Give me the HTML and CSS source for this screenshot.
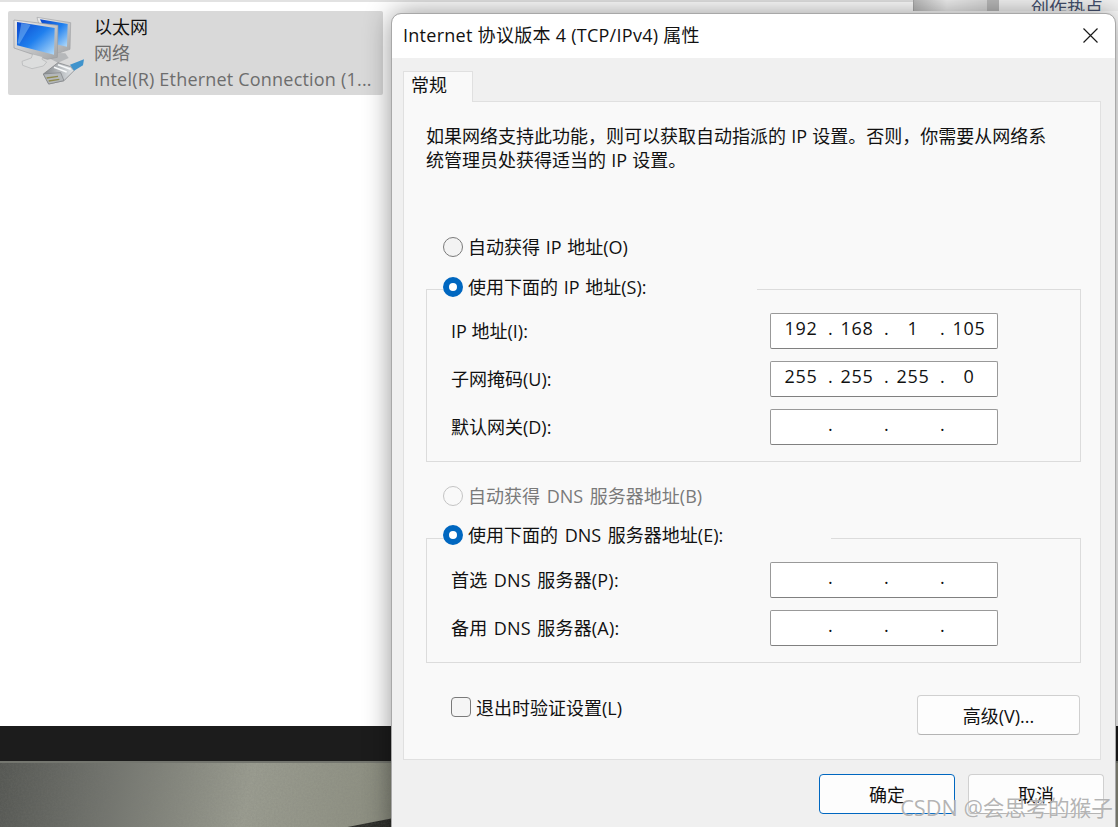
FILE: index.html
```html
<!DOCTYPE html>
<html lang="zh-CN">
<head>
    <meta charset="utf-8">
    <title>Internet 协议版本 4 (TCP/IPv4) 属性</title>
    <link rel="stylesheet" href="styles.css">
</head>
<body>
    <div class="desktop">
        <!-- 后面的网络连接窗口 -->
        <div class="top-strip">
            <div class="strip-a"></div>
            <div class="strip-c"></div>
            <div class="strip-d">创作热点</div>
        </div>
        <div class="connections">
            <div class="adapter">
                <svg class="adapter-icon" width="84" height="80" viewBox="0 0 252 240">
                    <defs>
                        <linearGradient id="screen" x1="0" y1="0" x2="1" y2="1">
                            <stop offset="0" stop-color="#0a46cc"/>
                            <stop offset="0.5" stop-color="#1f7fee"/>
                            <stop offset="1" stop-color="#b4dcfa"/>
                        </linearGradient>
                        <linearGradient id="frame" x1="0" y1="0" x2="1" y2="1">
                            <stop offset="0" stop-color="#eeeeef"/>
                            <stop offset="1" stop-color="#a2a4a6"/>
                        </linearGradient>
                        <linearGradient id="plug" x1="0" y1="0" x2="1" y2="0">
                            <stop offset="0" stop-color="#83878b"/>
                            <stop offset="1" stop-color="#e2e6e9"/>
                        </linearGradient>
                    </defs>
                    <!-- 后面的显示器 -->
                    <path d="M87 16 L188 32 L186 112 L150 124 L110 100 Z" fill="url(#frame)" stroke="#a0a2a4" stroke-width="2"/>
                    <path d="M96 22 L179 36 L177 104 L130 94 Z" fill="url(#screen)"/>
                    <path d="M130 122 L172 124 L182 138 L150 152 L126 140 Z" fill="#b6b8ba"/>
                    <!-- 前面的显示器 -->
                    <path d="M18 24 L150 40 L148 136 L118 142 L18 108 Z" fill="url(#frame)" stroke="#9a9c9e" stroke-width="2"/>
                    <path d="M27 30 L140 48 L138 128 L27 100 Z" fill="url(#screen)"/>
                    <path d="M40 33 L68 38 L34 96 L29 94 Z" fill="#7dbcf7" opacity="0.5"/>
                    <path d="M74 126 L104 134 L102 142 L116 150 L106 162 L72 170 L44 160 L42 148 L70 138 Z" fill="#dcdddd" stroke="#b0b2b3" stroke-width="2"/>
                    <!-- 网线水晶头 -->
                    <path d="M106 186 L150 152 L188 164 L198 176 L168 206 L122 216 Z" fill="url(#plug)" stroke="#77797c" stroke-width="2"/>
                    <path d="M106 186 L158 182 L168 206 L122 216 Z" fill="#b4b8bb" stroke="#7d8083" stroke-width="2"/>
                    <path d="M116 198 L150 193 M122 207 L154 202" stroke="#8f8a4e" stroke-width="4" fill="none"/>
                    <path d="M138 166 L176 180 M150 158 L188 172" stroke="#f7f9fa" stroke-width="5" fill="none"/>
                    <path d="M186 158 L228 142 L225 160 L198 176 Z" fill="#3f93cc"/>
                </svg>
                <div class="adapter-text">
                    <div class="adapter-name">以太网</div>
                    <div class="adapter-line">网络</div>
                    <div class="adapter-line latin">Intel(R) Ethernet Connection (1...</div>
                </div>
            </div>
        </div>
        <div class="taskbar"></div>
        <div class="wallpaper">
            <svg class="grain" width="392" height="64">
                <filter id="noise">
                    <feTurbulence type="fractalNoise" baseFrequency="0.55" numOctaves="2" seed="4"/>
                    <feColorMatrix values="0 0 0 0 0.2  0 0 0 0 0.2  0 0 0 0 0.18  0 0 0 1.2 -0.35"/>
                </filter>
                <rect width="392" height="64" filter="url(#noise)" opacity="0.3"/>
            </svg>
        </div>

        <!-- 属性对话框 -->
        <div class="dialog">
            <div class="title-bar">
                <span class="title-text">Internet 协议版本 4 (TCP/IPv4) 属性</span>
                <svg class="close-icon" width="15" height="15" viewBox="0 0 15 15">
                    <path d="M0.5 0.5 L14.5 14.5 M14.5 0.5 L0.5 14.5" stroke="#1a1a1a" stroke-width="1.2" fill="none"/>
                </svg>
            </div>
            <div class="dialog-body">
                <div class="tab">常规</div>
                <div class="tab-panel">
                    <p class="intro">如果网络支持此功能，则可以获取自动指派的 IP 设置。否则，你需要从网络系<br>统管理员处获得适当的 IP 设置。</p>

                    <label class="radio-line first-radio"><span class="radio"></span>自动获得 IP 地址(O)</label>
                    <div class="group">
                        <label class="radio-line legend"><span class="radio checked"></span>使用下面的 IP 地址(S):</label>
                        <div class="field-row">
                            <span class="field-label">IP 地址(I):</span>
                            <div class="ip-field">
                                <span class="seg">192</span><span class="dot">.</span>
                                <span class="seg">168</span><span class="dot">.</span>
                                <span class="seg">1</span><span class="dot">.</span>
                                <span class="seg">105</span>
                            </div>
                        </div>
                        <div class="field-row">
                            <span class="field-label">子网掩码(U):</span>
                            <div class="ip-field">
                                <span class="seg">255</span><span class="dot">.</span>
                                <span class="seg">255</span><span class="dot">.</span>
                                <span class="seg">255</span><span class="dot">.</span>
                                <span class="seg">0</span>
                            </div>
                        </div>
                        <div class="field-row">
                            <span class="field-label">默认网关(D):</span>
                            <div class="ip-field">
                                <span class="seg"></span><span class="dot">.</span>
                                <span class="seg"></span><span class="dot">.</span>
                                <span class="seg"></span><span class="dot">.</span>
                                <span class="seg"></span>
                            </div>
                        </div>
                    </div>

                    <label class="radio-line dns-radio disabled"><span class="radio"></span>自动获得 DNS 服务器地址(B)</label>
                    <div class="group dns-group">
                        <label class="radio-line legend"><span class="radio checked"></span>使用下面的 DNS 服务器地址(E):</label>
                        <div class="field-row">
                            <span class="field-label">首选 DNS 服务器(P):</span>
                            <div class="ip-field">
                                <span class="seg"></span><span class="dot">.</span>
                                <span class="seg"></span><span class="dot">.</span>
                                <span class="seg"></span><span class="dot">.</span>
                                <span class="seg"></span>
                            </div>
                        </div>
                        <div class="field-row">
                            <span class="field-label">备用 DNS 服务器(A):</span>
                            <div class="ip-field">
                                <span class="seg"></span><span class="dot">.</span>
                                <span class="seg"></span><span class="dot">.</span>
                                <span class="seg"></span><span class="dot">.</span>
                                <span class="seg"></span>
                            </div>
                        </div>
                    </div>

                    <div class="panel-foot">
                        <label class="check-line"><span class="checkbox"></span>退出时验证设置(L)</label>
                        <button class="btn advanced">高级(V)...</button>
                    </div>
                </div>
                <div class="dialog-buttons">
                    <button class="btn primary">确定</button>
                    <button class="btn">取消</button>
                </div>
            </div>
        </div>

        <div class="watermark">CSDN @会思考的猴子</div>
    </div>
</body>
</html>
```

FILE: styles.css
```css
* {
    box-sizing: border-box;
}

html, body {
    margin: 0;
    height: 100%;
    overflow: hidden;
}

body {
    background: #fff;
    color: #111;
    font-family: "Open Sans", "Noto Sans CJK SC", sans-serif;
    font-size: 18px;
}

.desktop {
    position: relative;
    width: 1118px;
    height: 827px;
    display: flex;
    flex-direction: column;
    overflow: hidden;
}

/* 顶部露出的窗口边 */
.top-strip {
    display: flex;
    height: 14px;
    flex: none;
    background: #f6f6f6;
}

.strip-a {
    width: 913px;
    border-top: 2px solid #e2e2e2;
    background: #fff;
}

.strip-c {
    width: 86px;
    background: linear-gradient(90deg, #bdbdbd, #f0f0f0 45%, #dcdcdc);
    border-left: 1px solid #aaa;
    border-right: 12px solid #bababa;
}

.strip-d {
    flex: 1;
    height: 14px;
    padding-left: 32px;
    color: #44506e;
    white-space: nowrap;
    overflow: hidden;
    line-height: 16px;
    background: #f4f4f4;
}

/* 网络连接列表 */
.connections {
    flex: 1;
    padding-left: 8px;
    margin-top: -3px;
    background: #fff;
}

.adapter {
    width: 375px;
    height: 84px;
    display: flex;
    background: #d9d9d9;
    border-radius: 2px;
}

.adapter-icon {
    flex: none;
    margin: 1px 2px 0 0;
    filter: blur(0.4px);
}

.adapter-text {
    padding-top: 3px;
    line-height: 26px;
    white-space: nowrap;
}

.adapter-name {
    color: #111;
}

.adapter-line {
    color: #6d6d6d;
}

.latin {
    letter-spacing: 0.2px;
}

.taskbar {
    height: 35px;
    flex: none;
    background: #1c1c1c;
}

.wallpaper {
    height: 66px;
    flex: none;
    border-top: 2px solid #74766f;
    background:
        linear-gradient(169deg, transparent 0 calc(100% - 9px), #2b2c28 calc(100% - 8px)) 320px 0 / 72px 100% no-repeat,
        linear-gradient(100deg, #555753 0, #72746e 110px, #9a9c90 250px, #8c8e80 392px);
}

.grain {
    display: block;
}

/* 对话框 */
.dialog {
    position: absolute;
    left: 392px;
    top: 14px;
    width: 723px;
    height: 830px;
    border-radius: 9px;
    overflow: hidden;
    background: #f0f0f0;
    box-shadow: 0 0 28px rgba(0, 0, 0, 0.45);
    outline: 1px solid #a8a8a8;
}

.title-bar {
    height: 44px;
    background: #fff;
    display: flex;
    align-items: center;
    justify-content: space-between;
    padding: 0 17px 1px 11px;
    white-space: nowrap;
}

.title-text {
    margin-bottom: 3px;
    letter-spacing: 0.27px;
}

.dialog-body {
    padding: 13px 14px 0 11px;
}

.tab {
    width: 70px;
    height: 31px;
    margin-bottom: -1px;
    padding-left: 7px;
    line-height: 26px;
    background: #f9f9f9;
    border: 1px solid #e0e0e0;
    border-bottom: none;
    position: relative;
    z-index: 1;
}

.tab-panel {
    height: 659px;
    padding: 22px 19px 0 22px;
    background: #f9f9f9;
    border: 1px solid #e0e0e0;
}

.intro {
    margin: 0;
    line-height: 24px;
    white-space: nowrap;
    word-spacing: 0.5px;
}

.radio-line {
    display: flex;
    align-items: center;
    gap: 5px;
    height: 26px;
    white-space: nowrap;
    word-spacing: 1px;
}

.first-radio {
    margin: 61px 0 0 17px;
}

.dns-radio {
    margin: 20px 0 0 17px;
    word-spacing: 2px;
}

.disabled {
    color: #7a7a7a;
}

.radio {
    width: 20px;
    height: 20px;
    flex: none;
    margin-top: 2px;
    border-radius: 50%;
    border: 1px solid #7a7a7a;
    background: #f3f3f3;
}

.disabled .radio {
    border-color: #c4c4c4;
    background: #f9f9f9;
}

.radio.checked {
    border: 6px solid #0067c0;
    background: #fff;
}

.group {
    position: relative;
    margin-top: 30px;
    height: 173px;
    padding: 23px 0 0 24px;
    border: 1px solid #dcdcdc;
}

.dns-group {
    height: 125px;
}

.legend {
    position: absolute;
    left: 16px;
    top: -17px;
    padding-right: 111px;
    background: #f9f9f9;
}

.dns-group .legend {
    top: -18px;
    padding-right: 108px;
    word-spacing: 2px;
}

.field-row {
    display: flex;
    align-items: center;
    justify-content: space-between;
    height: 36px;
    margin-bottom: 12px;
    padding-right: 82px;
    white-space: nowrap;
}

.dns-group .field-label {
    word-spacing: 1.5px;
    letter-spacing: 0.2px;
}

.field-label {
    margin-bottom: 2px;
}

.ip-field {
    width: 228px;
    height: 36px;
    flex: none;
    display: flex;
    padding-left: 5px;
    line-height: 28px;
    background: #fff;
    border: 1px solid #999;
    border-bottom-color: #808080;
    border-radius: 2px;
}

.seg {
    width: 52px;
    text-align: center;
    text-indent: -2px;
    letter-spacing: 0.7px;
}

.dot {
    width: 4px;
    text-align: center;
}

.panel-foot {
    display: flex;
    align-items: flex-start;
    justify-content: space-between;
    margin-top: 32px;
    padding: 0 1px 0 25px;
}

.check-line {
    display: flex;
    align-items: center;
    gap: 5px;
    height: 24px;
    white-space: nowrap;
}

.checkbox {
    width: 20px;
    height: 20px;
    border: 1px solid #7a7a7a;
    border-radius: 4px;
    background: #f5f5f5;
}

.btn {
    width: 136px;
    height: 40px;
    padding: 0;
    font: inherit;
    color: #111;
    background: #fdfdfd;
    border: 1px solid #d0d0d0;
    border-bottom-color: #b4b4b4;
    border-radius: 4px;
}

.advanced {
    width: 163px;
}

.primary {
    border: 1.5px solid #0067c0;
}

.dialog-buttons {
    display: flex;
    justify-content: flex-end;
    gap: 13px;
    margin: 14px -3px 0 0;
}

.watermark {
    position: absolute;
    right: 5px;
    bottom: 6px;
    font-size: 21.7px;
    line-height: 26px;
    color: rgba(130, 130, 130, 0.6);
    text-shadow: 0 0 1px #fff;
    white-space: nowrap;
}
```
